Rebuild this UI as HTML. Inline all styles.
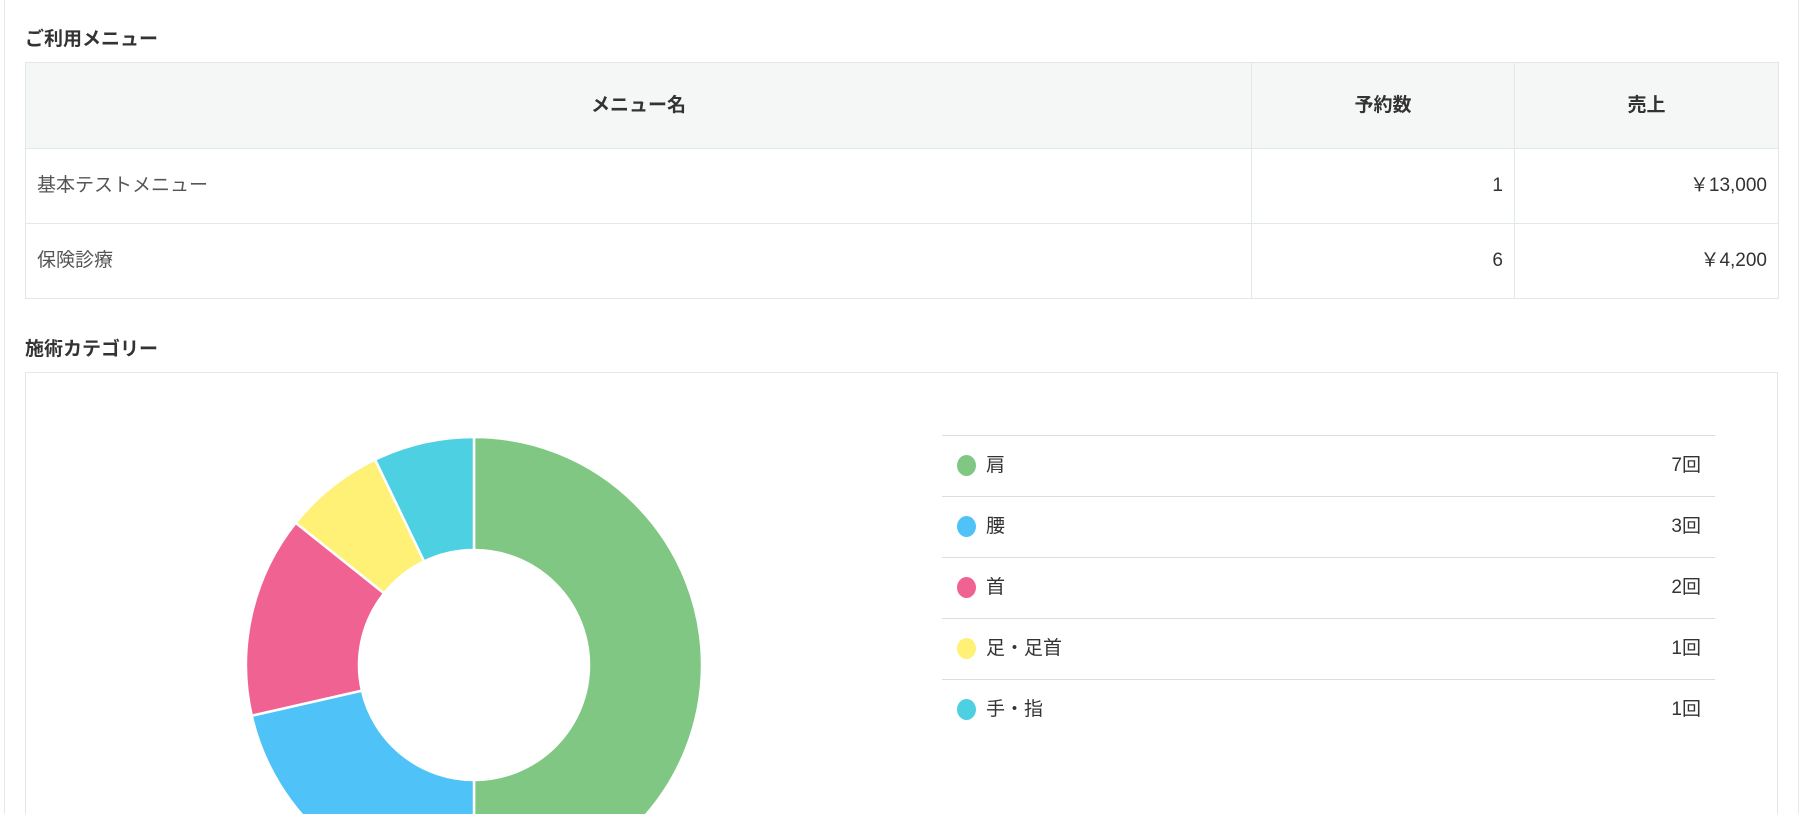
<!DOCTYPE html>
<html><head><meta charset="utf-8"><style>
html,body{margin:0;padding:0;width:1808px;height:814px;overflow:hidden;background:#fff;font-family:"Liberation Sans","Noto Sans CJK JP",sans-serif;color:#333}
#wrap{position:relative;width:1808px;height:814px;overflow:hidden}
.lb{position:absolute;left:4px;top:0;width:1px;height:814px;background:#e3e8ea}
.rb{position:absolute;left:1798px;top:0;width:1px;height:814px;background:#e3e8ea}
h2{position:absolute;left:25px;margin:0;font-size:19px;font-weight:bold;color:#333}
table{position:absolute;left:25px;top:62px;width:1753px;border-collapse:collapse;font-size:19px;table-layout:fixed}
td,th{border:1px solid #e1e8e8;padding:0 11px}
th{background:#f5f6f6;height:86px;font-weight:bold;color:#333;padding-bottom:4px;box-sizing:border-box}
td{height:75px;color:#555;vertical-align:top;padding-top:25px;box-sizing:border-box;line-height:24px}
td span{display:inline-block;line-height:24px;vertical-align:top}
td.n{text-align:right;color:#333}
.card{position:absolute;left:25px;top:372px;width:1751px;height:441px;border:1px solid #e1e8e8;border-bottom:none}
.leg{position:absolute;left:942px;top:435px;width:773px}
.row{height:60px;border-top:1px solid #dcdde0;position:relative;font-size:19px;color:#333}
.dot{position:absolute;left:15px;top:19px;width:19px;height:21px;border-radius:50%}
.lab{position:absolute;left:44px;top:14px}
.cnt{position:absolute;right:14px;top:14px}
</style></head><body><div id="wrap">
<div class="lb"></div><div class="rb"></div>
<h2 style="top:24px">ご利用メニュー</h2>
<table>
<colgroup><col style="width:1226px"><col style="width:263px"><col style="width:264px"></colgroup>
<tr><th>メニュー名</th><th>予約数</th><th>売上</th></tr>
<tr><td><span>基本テストメニュー</span></td><td class="n"><span>1</span></td><td class="n"><span>￥13,000</span></td></tr>
<tr><td><span>保険診療</span></td><td class="n"><span>6</span></td><td class="n"><span>￥4,200</span></td></tr>
</table>
<h2 style="top:334px">施術カテゴリー</h2>
<div class="card"></div>
<svg style="position:absolute;left:0;top:0" width="1808" height="814" viewBox="0 4 1808 814">
<g stroke="#fff" stroke-width="2.5">
<path fill="#81c784" d="M474 441 A228 228 0 0 1 474 897 L474 784 A115 115 0 0 0 474 554Z"/>
<path fill="#4fc3f7" d="M474 897 A228 228 0 0 1 251.7 719.7 L361.9 694.6 A115 115 0 0 0 474 784Z"/>
<path fill="#f06292" d="M251.7 719.7 A228 228 0 0 1 295.7 526.8 L384.1 597.3 A115 115 0 0 0 361.9 694.6Z"/>
<path fill="#fff176" d="M295.7 526.8 A228 228 0 0 1 375.1 463.6 L424.1 565.4 A115 115 0 0 0 384.1 597.3Z"/>
<path fill="#4dd0e1" d="M375.1 463.6 A228 228 0 0 1 474 441 L474 554 A115 115 0 0 0 424.1 565.4Z"/>
</g></svg>
<div class="leg">
<div class="row"><span class="dot" style="background:#81c784"></span><span class="lab">肩</span><span class="cnt">7回</span></div>
<div class="row"><span class="dot" style="background:#4fc3f7"></span><span class="lab">腰</span><span class="cnt">3回</span></div>
<div class="row"><span class="dot" style="background:#f06292"></span><span class="lab">首</span><span class="cnt">2回</span></div>
<div class="row"><span class="dot" style="background:#fff176"></span><span class="lab">足・足首</span><span class="cnt">1回</span></div>
<div class="row"><span class="dot" style="background:#4dd0e1"></span><span class="lab">手・指</span><span class="cnt">1回</span></div>
</div>
</div></body></html>
